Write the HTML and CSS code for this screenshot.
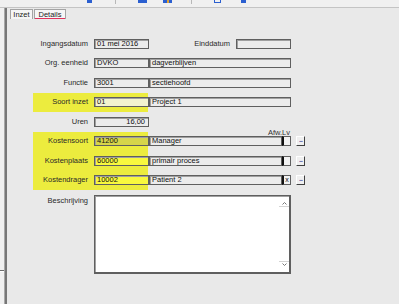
FILE: index.html
```html
<!DOCTYPE html>
<html lang="nl">

<head>
    <meta charset="UTF-8">
    <meta name="viewport" content="width=device-width, initial-scale=1.0">
    <title>Inzet details</title>
    <link rel="stylesheet" href="styles.css">
</head>

<body>
    <!-- werkbalk, alleen de onderkant is zichtbaar -->
    <div class="toolbar">
        <span class="tb-icon tb-blue" style="margin-left: 87px"></span>
        <span class="tb-sep" style="margin-left: 23px"></span>
        <span class="tb-icon tb-blue tb-wide" style="margin-left: 22px"></span>
        <span class="tb-icon tb-mix tb-wide" style="margin-left: 16px"></span>
        <span class="tb-sep" style="margin-left: 19px"></span>
        <span class="tb-icon tb-outline" style="margin-left: 22px"></span>
        <span class="tb-icon tb-blue" style="margin-left: 20px"></span>
    </div>

    <div class="main">
        <div class="side">
            <div class="side-split"></div>
        </div>

        <div class="content">
            <div class="tabs">
                <span class="tab tab-inzet">Inzet</span>
                <span class="tab tab-details">Details</span>
            </div>

            <div class="form">
                <!-- Ingangsdatum / Einddatum -->
                <div class="row">
                    <span class="lbl">Ingangsdatum</span>
                    <span class="fld">01 mei 2016</span>
                    <div class="end-group">
                        <span class="lbl-inline">Einddatum</span>
                        <span class="fld fld-date"></span>
                    </div>
                </div>

                <div class="row">
                    <span class="lbl">Org. eenheid</span>
                    <span class="fld">DVKO</span>
                    <span class="fld wide">dagverblijven</span>
                </div>

                <div class="row">
                    <span class="lbl">Functie</span>
                    <span class="fld">3001</span>
                    <span class="fld wide">sectiehoofd</span>
                </div>

                <div class="hl">
                    <div class="row">
                        <span class="lbl">Soort inzet</span>
                        <span class="fld fld-pale">01</span>
                        <span class="fld wide">Project 1</span>
                    </div>
                </div>

                <div class="row">
                    <span class="lbl">Uren</span>
                    <span class="fld num">16,00</span>
                    <span class="afw">Afw.Lv</span>
                </div>

                <div class="hl">
                    <div class="row">
                        <span class="lbl">Kostensoort</span>
                        <span class="fld fld-olive">41200</span>
                        <span class="fld">Manager</span>
                        <span class="chk"></span>
                        <span class="btn">...</span>
                    </div>
                    <div class="row">
                        <span class="lbl">Kostenplaats</span>
                        <span class="fld fld-yellow">60000</span>
                        <span class="fld">primair proces</span>
                        <span class="chk"></span>
                        <span class="btn">...</span>
                    </div>
                    <div class="row">
                        <span class="lbl">Kostendrager</span>
                        <span class="fld fld-yellow">10002</span>
                        <span class="fld">Patient 2</span>
                        <span class="chk">x</span>
                        <span class="btn">...</span>
                    </div>
                </div>

                <div class="row row-memo">
                    <span class="lbl lbl-top">Beschrijving</span>
                    <div class="memo">
                        <div class="scroll">
                            <div class="sc-up">
                                <svg width="5" height="3" viewBox="0 0 5 3"><polyline points="0.5,2.5 2.5,0.5 4.5,2.5" fill="none" stroke="#777" stroke-width="1"/></svg>
                            </div>
                            <div class="sc-down">
                                <svg width="5" height="3" viewBox="0 0 5 3"><polyline points="0.5,0.5 2.5,2.5 4.5,0.5" fill="none" stroke="#777" stroke-width="1"/></svg>
                            </div>
                        </div>
                    </div>
                </div>
            </div>
        </div>
    </div>
</body>

</html>
```

FILE: styles.css
```css
* {
    box-sizing: border-box;
}

body {
    margin: 0;
    width: 399px;
    height: 304px;
    overflow: hidden;
    background-color: #e9e9e9;
    font-family: "Liberation Sans", Arial, sans-serif;
    font-size: 7.5px;
    color: #2a2a2a;
}

/* werkbalk */
.toolbar {
    display: flex;
    align-items: flex-start;
    height: 8px;
    background-color: #f0f0f0;
    border-bottom: 1px solid #c4c4c4;
}

.tb-icon {
    width: 5px;
    height: 3px;
}

.tb-wide {
    width: 9px;
}

.tb-blue {
    background-color: #2b5fd0;
}

.tb-mix {
    background: linear-gradient(to right, #2b5fd0 40%, #e0a030 40%, #e0a030 70%, #2b5fd0 70%);
}

.tb-outline {
    width: 7px;
    border: 1px solid #2b5fd0;
    border-top: none;
}

.tb-sep {
    width: 1px;
    height: 4px;
    background-color: #b8b8b8;
}

/* hoofdgedeelte */
.main {
    display: flex;
    height: 296px;
}

.side {
    width: 5px;
    background-color: #f0f0f0;
    border-right: 1px solid #a8a8a8;
}

.side-split {
    margin-top: 262px;
    height: 2px;
    border-top: 1px solid #6c6c6c;
    border-bottom: 1px solid #fff;
}

.content {
    flex: 1;
    border-left: 2px solid #777;
}

/* tabbladen */
.tabs {
    display: flex;
    height: 11px;
    padding: 1px 0 0 3px;
}

.tab {
    height: 10px;
    line-height: 9px;
    text-align: center;
    border: 1px solid #a4a4a4;
    border-bottom: none;
    background-color: #f6f6f6;
    color: #222;
}

.tab-inzet {
    width: 23px;
}

.tab-details {
    width: 32px;
    margin-left: 1px;
    box-shadow: inset 0 -1px 0 #e2325c;
}

/* formulier */
.form {
    margin: 15px 0 0 26px;
}

.row {
    display: grid;
    grid-template-columns: 61px 55px 133px 9px 5px 9px;
    align-items: center;
    height: 19.5px;
}

.hl {
    background: linear-gradient(to right, #ecec3e 115px, transparent 115px);
}

.lbl {
    grid-column: 1;
    text-align: right;
    padding-right: 6px;
    line-height: 10px;
    white-space: nowrap;
}

.fld {
    height: 10px;
    line-height: 8px;
    padding-left: 2px;
    border: 1px solid #5f5f5f;
    box-shadow: inset 1px 1px 0 #a0a0a0;
    background-color: #ececec;
    color: #111;
    white-space: nowrap;
    overflow: hidden;
}

.wide {
    grid-column: 3 / 5;
}

.num {
    text-align: right;
    padding-right: 3px;
}

.fld-pale {
    background-color: #f3f3cf;
}

.fld-olive {
    background-color: #d6d54a;
}

.fld-yellow {
    background-color: #f8f83e;
}

.end-group {
    grid-column: 3 / 5;
    display: flex;
    justify-content: flex-end;
    align-items: center;
    gap: 6px;
}

.lbl-inline {
    line-height: 10px;
}

.fld-date {
    width: 55px;
}

.afw {
    grid-column: 3 / 5;
    justify-self: end;
    align-self: end;
    line-height: 8px;
    margin-bottom: -5px;
    padding-right: 1px;
    color: #333;
}

.chk {
    height: 10px;
    line-height: 8px;
    font-size: 7px;
    text-align: center;
    border: 1px solid #5f5f5f;
    border-left: 2px solid #111;
    background-color: #f2f2f2;
    color: #111;
}

.btn {
    grid-column: 6;
    height: 10px;
    line-height: 6px;
    text-align: center;
    font-size: 7px;
    font-weight: bold;
    letter-spacing: -1px;
    border: 1px solid;
    border-color: #fff #404040 #404040 #fff;
    background-color: #f0f0f0;
    color: #6060a8;
}

/* beschrijving */
.row-memo {
    align-items: start;
    height: auto;
}

.lbl-top {
    margin-top: 6px;
}

.memo {
    grid-column: 2 / 5;
    height: 79px;
    margin-top: 5px;
    display: flex;
    justify-content: flex-end;
    border: 1px solid #5f5f5f;
    border-right-width: 2px;
    border-bottom-width: 2px;
    box-shadow: inset 1px 1px 0 #a0a0a0;
    background-color: #fff;
}

.scroll {
    width: 10px;
    display: flex;
    flex-direction: column;
    justify-content: space-between;
    padding: 4px 0;
}

.sc-up,
.sc-down {
    display: flex;
    justify-content: center;
    height: 7px;
}

.sc-up {
    align-items: flex-start;
    padding-top: 2px;
    border-bottom: 1px solid #d4d4d4;
}

.sc-down {
    align-items: flex-end;
    padding-bottom: 2px;
    border-top: 1px solid #d4d4d4;
}
```
